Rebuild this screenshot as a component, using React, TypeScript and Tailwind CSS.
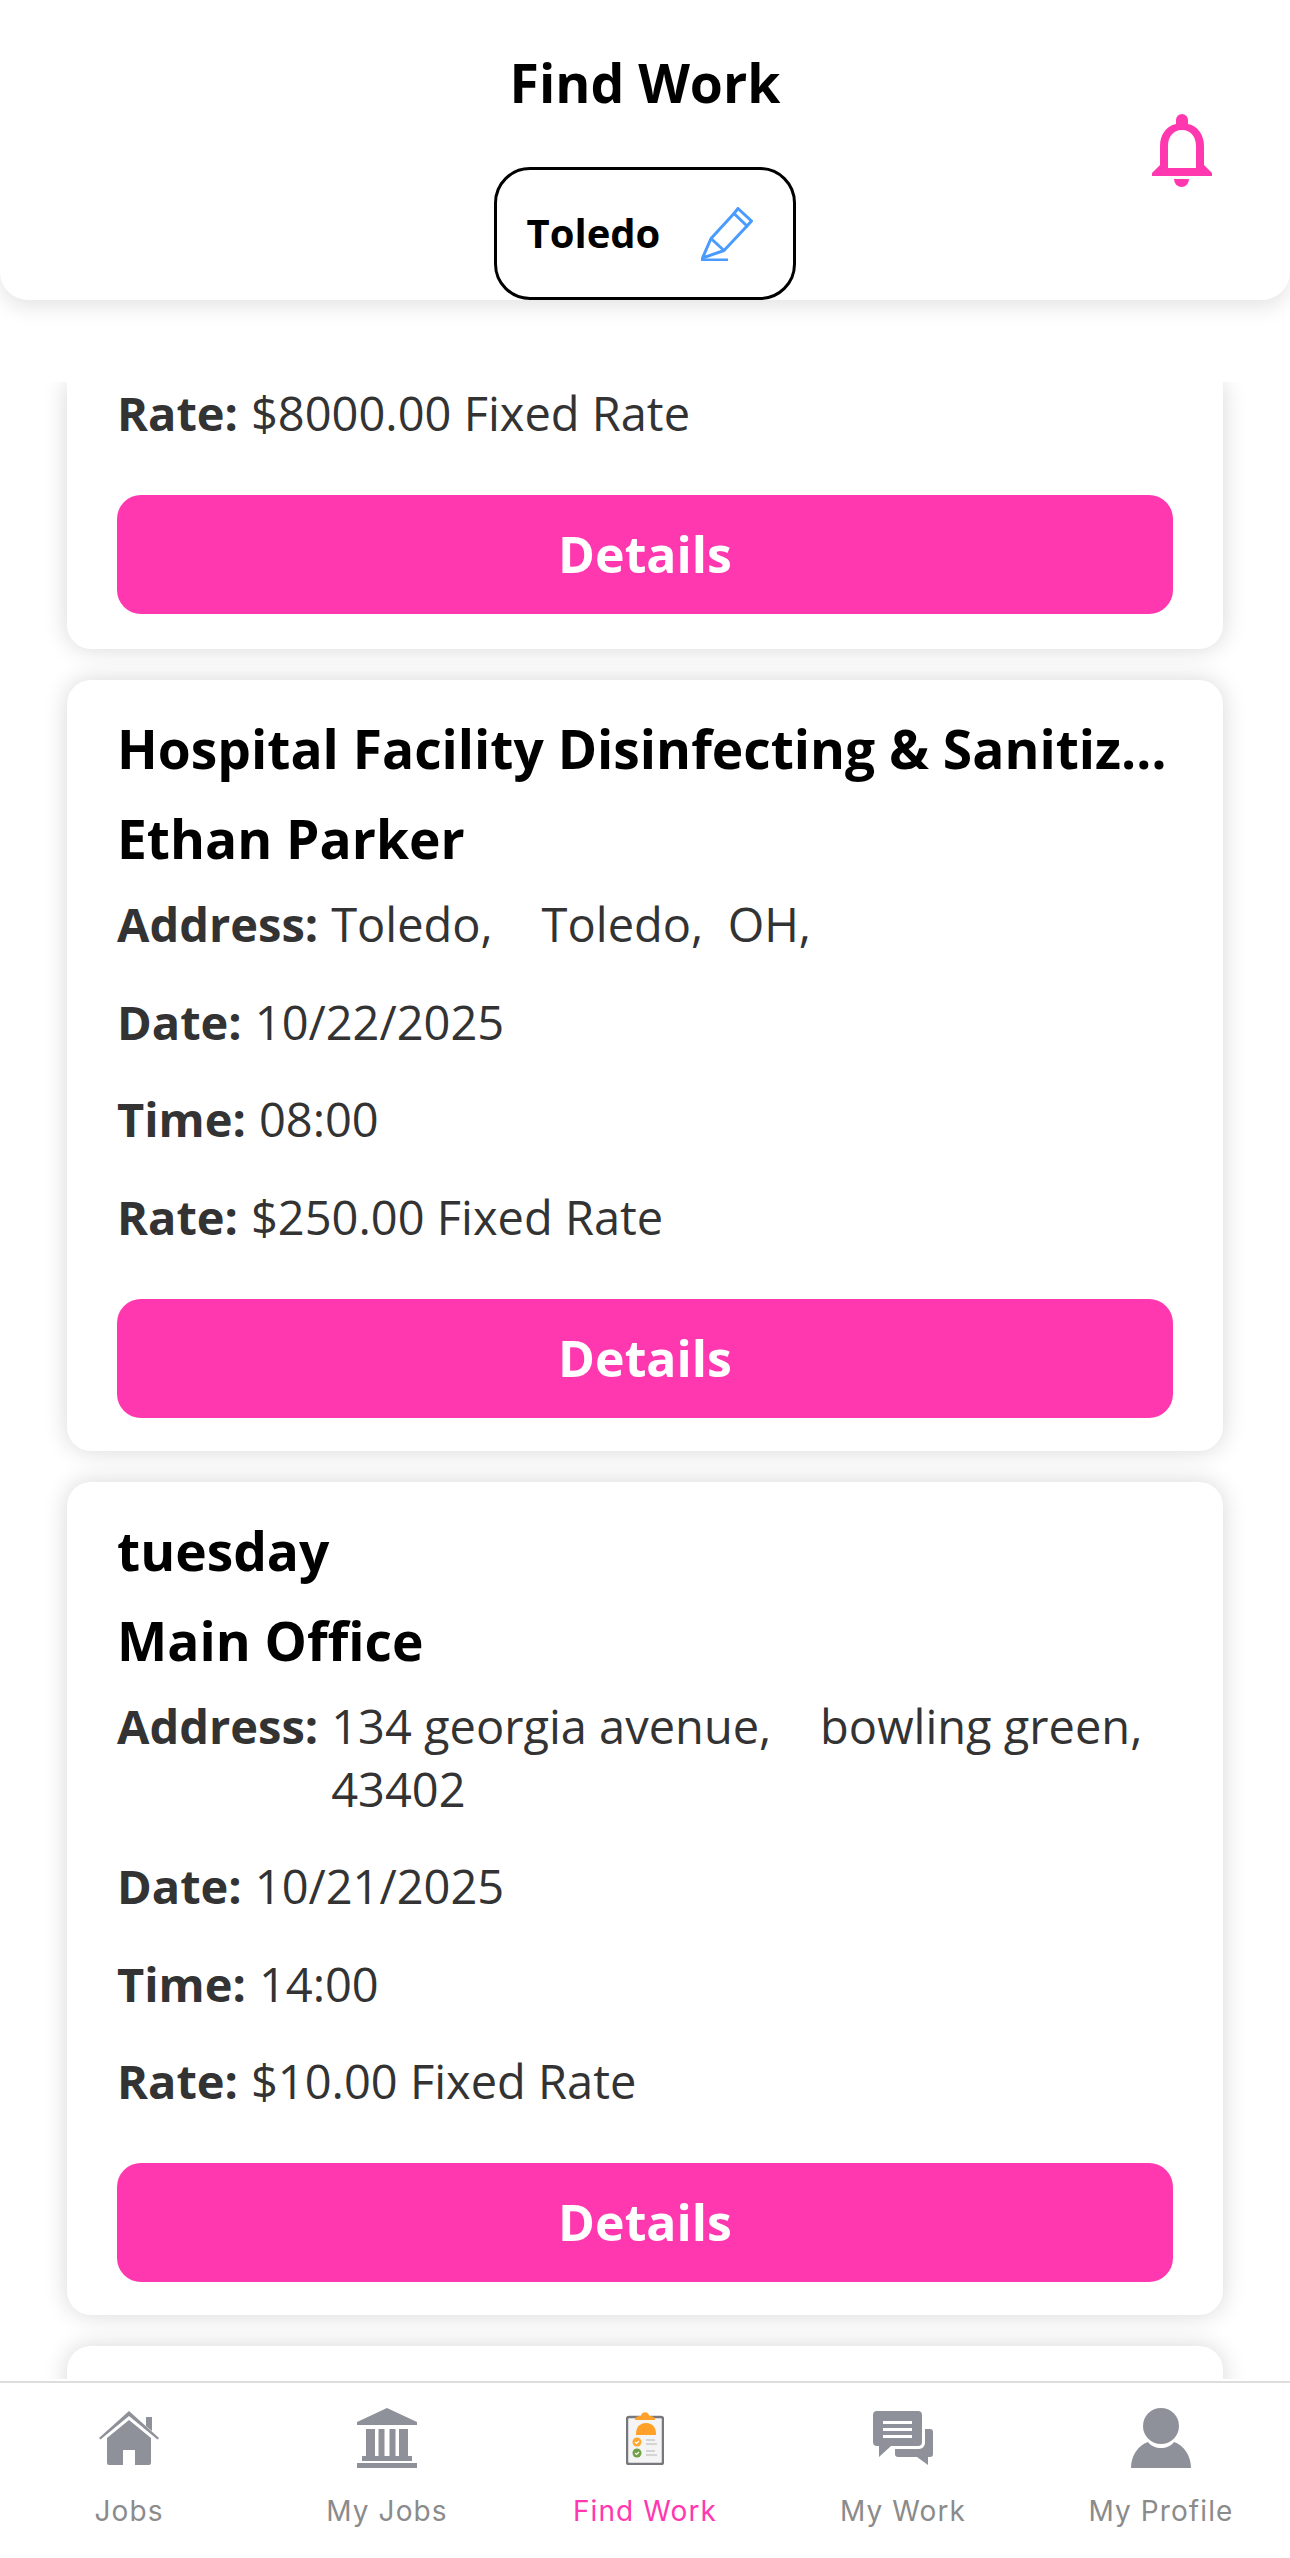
const font = { fontFamily: '"Open Sans", sans-serif' };

function BellIcon() {
  return (
    <svg viewBox="0 0 61 74" className="w-[61px] h-[74px]" fill="#ff38b0">
      <path d="M25 7a6 6 0 0 1 12 0v4C47 13 53 22 53 33v19l8 8v3H1v-3l8-8V33c0-11 6-20 16-22z M31 17c-9 0-14 7-14 16v22h28V33c0-9-5-16-14-16z" fillRule="evenodd" />
      <path d="M23 66h15a7.500 8 0 0 1-15 0z" />
    </svg>
  );
}

function PencilIcon() {
  return (
    <svg viewBox="0 0 52 54" className="w-[52px] h-[54px]" fill="none" stroke="#4a9bff" strokeWidth="3" strokeLinejoin="round">
      <path d="M37 1.500 50.500 14 46 19 33 6.500z" />
      <path d="M33 6.500 10 31.500 1.500 51 23 43.500 46 19" />
      <path d="M10 31.500 23 43.500" />
      <path d="M0 53h27" />
    </svg>
  );
}

function HomeIcon() {
  return (
    <svg viewBox="0 0 60 54" className="w-[60px] h-[54px]" fill="#8e9199">
      <path d="M47 6h6v14l-6-5z" />
      <path d="M30 0 60 27l-1.500 1.500L30 5 1.500 28.500 0 27z" />
      <path d="M30 9 52 27v25a2 2 0 0 1-2 2H36V39H24v15H10a2 2 0 0 1-2-2V27z" />
    </svg>
  );
}

function BankIcon() {
  return (
    <svg viewBox="0 0 60 60" className="w-[60px] h-[60px]" fill="#8e9199">
      <path d="M30 0 60 14v3H0v-3z" />
      <path d="M9 21h9v29H9zM21.500 21h6v29h-6zM32.500 21h6v29h-6zM42 21h9v29h-9z" />
      <path d="M5 48h50v5H5z" />
      <path d="M0 55h60v5H0z" />
    </svg>
  );
}

function ClipboardIcon() {
  return (
    <svg viewBox="0 0 38 54" className="w-[38px] h-[54px]">
      <rect x="1" y="6" width="36" height="47" rx="2" fill="#f4f4f4" stroke="#76787d" strokeWidth="2.500" />
      <path d="M9 9c0-3 2-4 6-4 0-5 8-5 8 0 4 0 6 1 6 4z" fill="#ffa028" />
      <path d="M10 23c0-6 3-11 10-11s10 5 10 11v1H10z" fill="#ffa028" />
      <circle cx="11" cy="31" r="4.500" fill="#ffa82e" />
      <circle cx="11" cy="42" r="4.500" fill="#6ea045" />
      <path d="M9 31l1.500 1.500L13 30M9 42l1.500 1.500L13 41" stroke="#fff" strokeWidth="1.200" fill="none" />
      <path d="M20 29h9M20 33h11M20 40h9M20 44h11" stroke="#c9c9c9" strokeWidth="1.600" />
    </svg>
  );
}

function ChatIcon() {
  return (
    <svg viewBox="0 0 60 54" className="w-[60px] h-[54px]" fill="#8e9199">
      <path d="M4 0h41a4 4 0 0 1 4 4v27a4 4 0 0 1-4 4H18L6 46V35H4a4 4 0 0 1-4-4V4a4 4 0 0 1 4-4z" />
      <path d="M10 10h29v3H10zM10 17h29v3H10zM10 24h29v3H10z" fill="#fff" />
      <path d="M52 18h5a3 3 0 0 1 3 3v22a3 3 0 0 1-3 3h-2v8L44 46H25a3 3 0 0 1-3-3v-5h24a6 6 0 0 0 6-6z" />
    </svg>
  );
}

function ProfileIcon() {
  return (
    <svg viewBox="0 0 60 60" className="w-[60px] h-[60px]" fill="#8e9199">
      <circle cx="30" cy="18" r="18" />
      <path d="M17 34c3 4 8 6 13 6s10-2 13-6c10 3 17 14 17 26H0c0-12 7-23 17-26z" />
    </svg>
  );
}

function Row({ label, children }: { label: string; children: React.ReactNode }) {
  return (
    <div className="flex gap-[13px] text-[47px] leading-[63px] text-[#333333] mb-[34.500px]">
      <span className="font-bold shrink-0">{label}</span>
      <span className="whitespace-pre-wrap">{children}</span>
    </div>
  );
}

function DetailsButton() {
  return (
    <button className="block w-full h-[119px] mt-[50px] rounded-[24px] bg-[#ff38b0] text-white text-[50px] font-bold">
      Details
    </button>
  );
}

interface Job {
  title: string;
  owner: string;
  address: string;
  date: string;
  time: string;
  rate: string;
}

const jobs: Job[] = [
  {
    title: 'Hospital Facility Disinfecting & Sanitization Services',
    owner: 'Ethan Parker',
    address: 'Toledo,    Toledo,  OH,',
    date: '10/22/2025',
    time: '08:00',
    rate: '$250.00 Fixed Rate',
  },
  {
    title: 'tuesday',
    owner: 'Main Office',
    address: '134 georgia avenue,    bowling green,  43402',
    date: '10/21/2025',
    time: '14:00',
    rate: '$10.00 Fixed Rate',
  },
];

const cardClass = 'bg-white mx-[67px] rounded-[24px] px-[50px] shadow-[0_0_24px_rgba(0,0,0,0.16)]';

function JobCard({ job }: { job: Job }) {
  return (
    <div className={`${cardClass} pt-[24px] pb-[33px] mt-[31px]`}>
      <div className="truncate text-[53.300px] leading-[90px] font-bold text-black">{job.title}</div>
      <div className="text-[53.300px] leading-[90px] font-bold text-black">{job.owner}</div>
      <div className="mt-[9px]">
        <Row label="Address:">{job.address}</Row>
        <Row label="Date:">{job.date}</Row>
        <Row label="Time:">{job.time}</Row>
        <Row label="Rate:">{job.rate}</Row>
      </div>
      <DetailsButton />
    </div>
  );
}

const tabs = [
  { label: 'Jobs', icon: <HomeIcon /> },
  { label: 'My Jobs', icon: <BankIcon /> },
  { label: 'Find Work', icon: <ClipboardIcon />, active: true },
  { label: 'My Work', icon: <ChatIcon /> },
  { label: 'My Profile', icon: <ProfileIcon /> },
];

export default function App() {
  return (
    <div className="relative w-[1290px] h-[2558px] bg-white flex flex-col overflow-hidden" style={font}>
      {/* header */}
      <header className="relative z-10 h-[300px] shrink-0 bg-white rounded-b-[28px] shadow-[0_8px_20px_rgba(0,0,0,0.1)] flex flex-col items-center">
        <h1 className="mt-[48px] text-[53.500px] leading-[70px] font-bold text-black">Find Work</h1>
        <div className="mt-[49px] -ml-[1px] w-[302px] h-[133px] border-[3px] border-black rounded-[36px] flex items-center pl-[30px] gap-[41px]">
          <span className="text-[40px] leading-[54px] font-bold text-black -mt-[2px]">Toledo</span>
          <PencilIcon />
        </div>
        <div className="absolute right-[78px] top-[113px]">
          <BellIcon />
        </div>
      </header>

      {/* job list */}
      <main className="mt-[82px] h-[1997px] shrink-0 overflow-hidden">
        <div className={`${cardClass} rounded-t-none pb-[35px]`}>
          <Row label="Rate:">$8000.00 Fixed Rate</Row>
          <DetailsButton />
        </div>
        {jobs.map((job) => (
          <JobCard key={job.title} job={job} />
        ))}
        <div className={`${cardClass} h-[100px] mt-[31px]`} />
      </main>

      {/* tab bar */}
      <nav className="mt-[2px] flex-1 border-t-2 border-[#dddddd] grid grid-cols-5 bg-white">
        {tabs.map((tab) => (
          <div key={tab.label} className="flex flex-col items-center">
            <div className="h-[60px] mt-[25px] flex items-center">{tab.icon}</div>
            <span
              className={`mt-[23px] text-[28px] leading-[40px] tracking-[1.100px] ${tab.active ? 'text-[#ff38b0]' : 'text-[#8b8b8b]'}`}
              style={{ fontFamily: 'Inter, sans-serif' }}
            >
              {tab.label}
            </span>
          </div>
        ))}
      </nav>
    </div>
  );
}
